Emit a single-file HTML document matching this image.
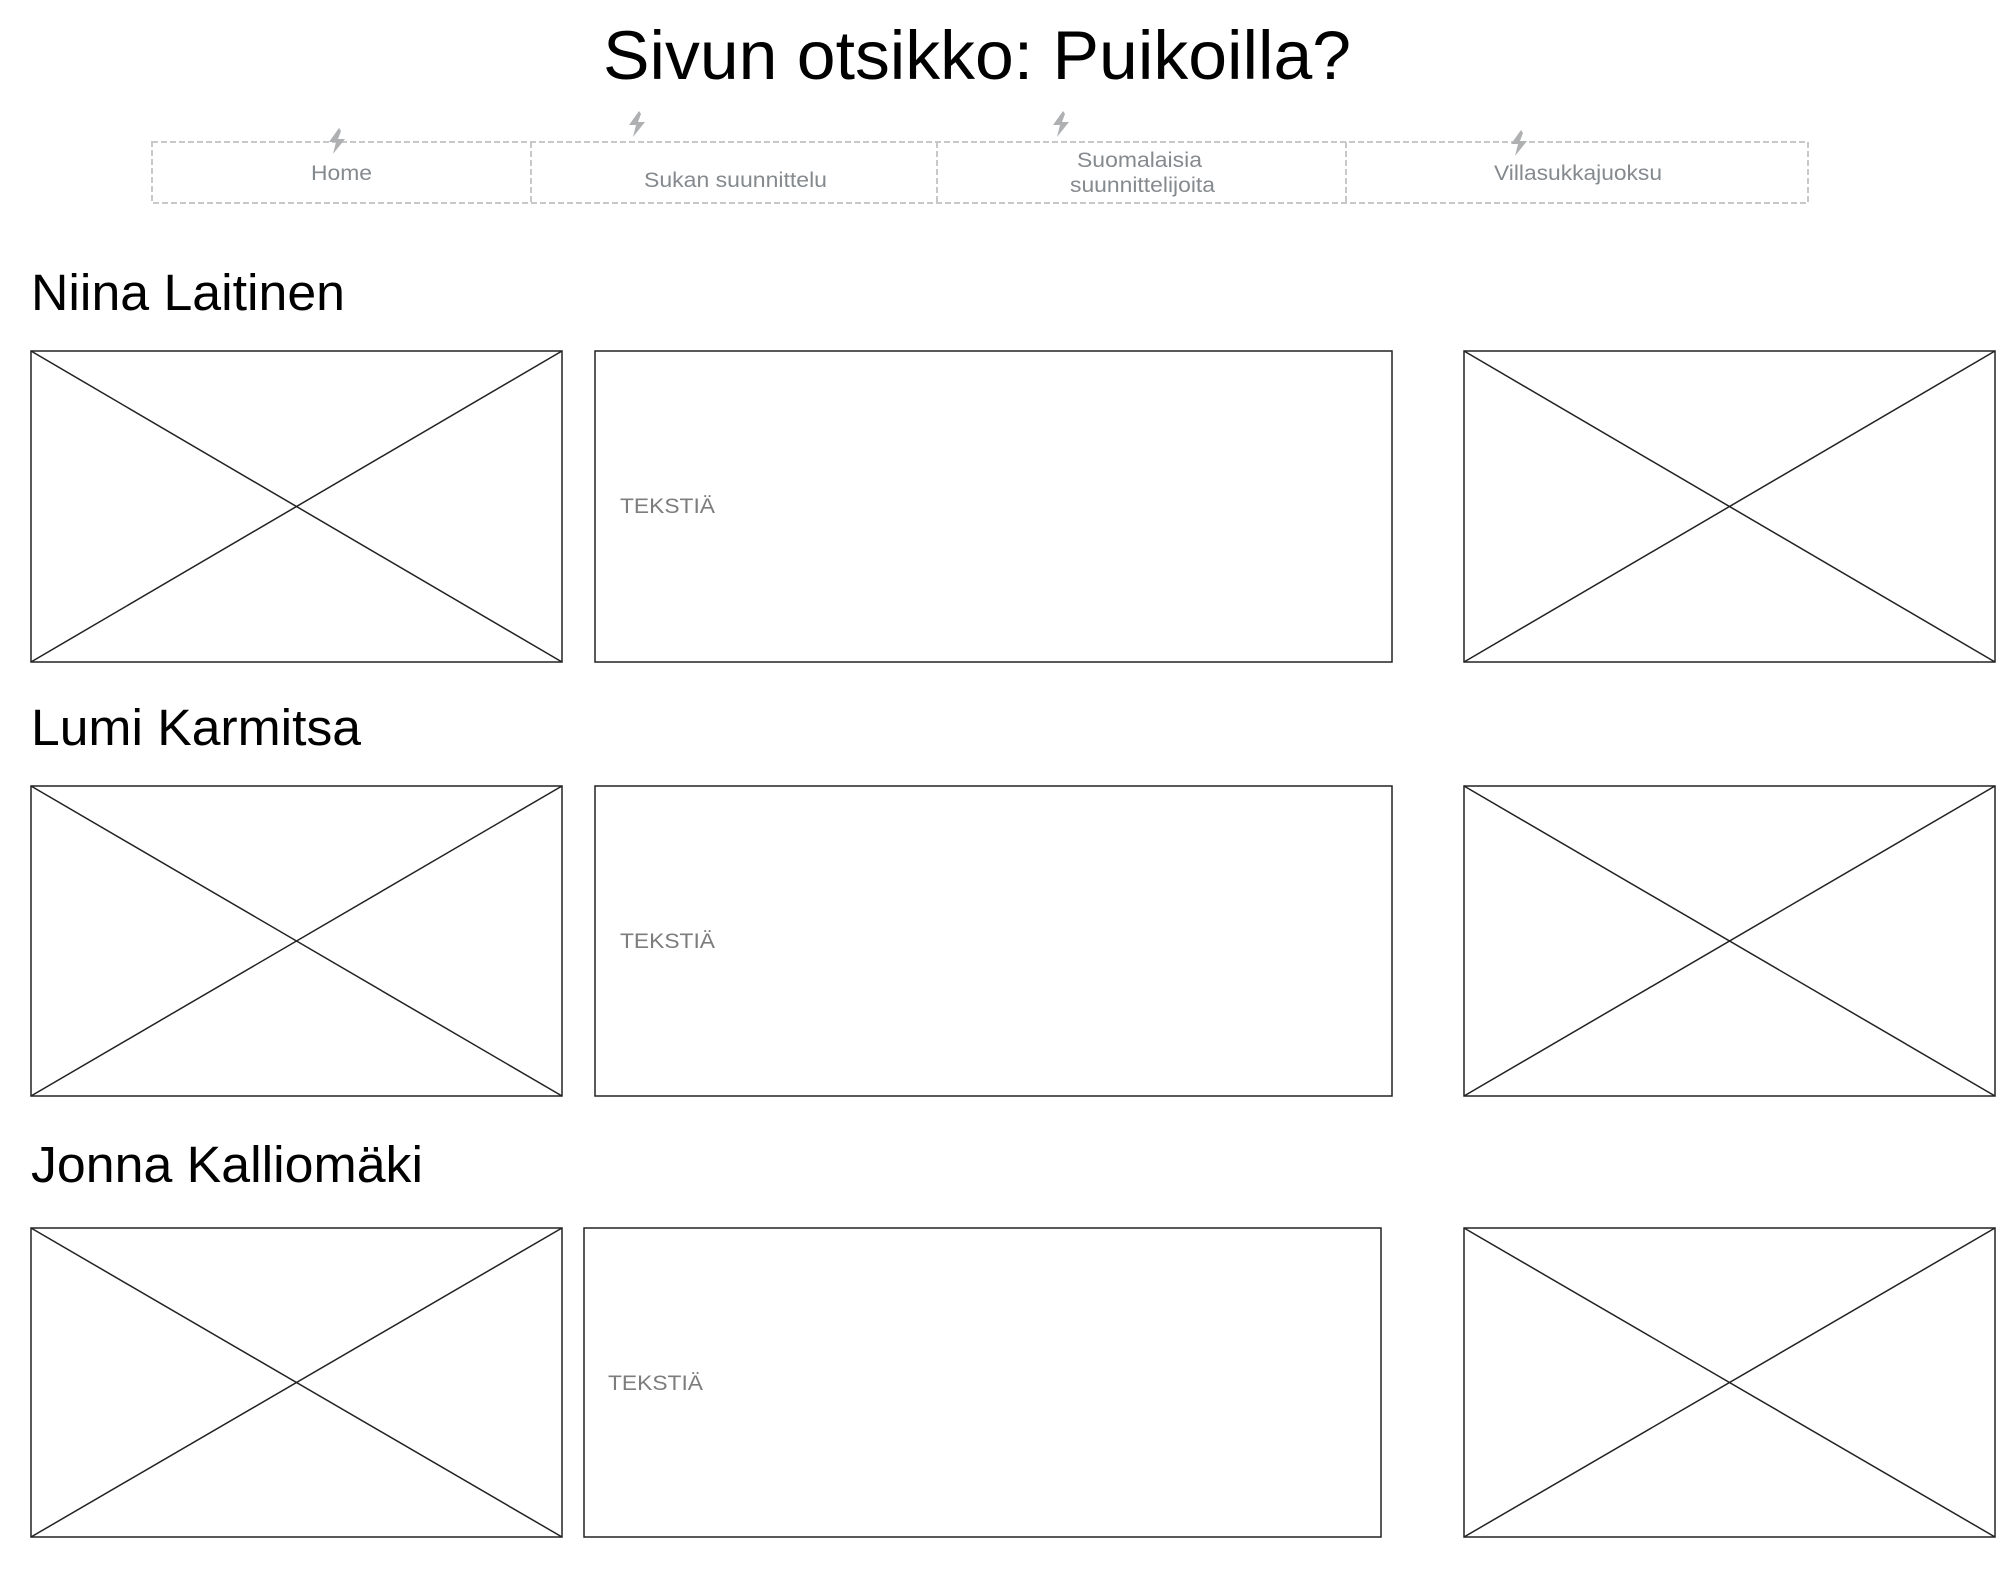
<!DOCTYPE html>
<html><head><meta charset="utf-8"><style>
html,body{margin:0;padding:0;background:#fff;}
svg{display:block;font-family:"Liberation Sans",Arial,sans-serif;}
</style></head><body>
<svg width="2016" height="1584" viewBox="0 0 2016 1584" xmlns="http://www.w3.org/2000/svg">
<defs>
<symbol id="bolt" viewBox="0 0 22 26">
<polygon points="13,0 3,14 10,14 7,26 19,11 12,11 15,3" fill="#aeb0b2"/>
</symbol>
</defs>
<text x="977" y="79" font-size="69" text-anchor="middle" fill="#000" textLength="748" lengthAdjust="spacingAndGlyphs">Sivun otsikko: Puikoilla?</text>

<g fill="none" stroke="#c8c8c8" stroke-width="2" stroke-dasharray="6,3">
<rect x="152" y="142" width="1656" height="61"/>
<line x1="531" y1="142" x2="531" y2="203"/>
<line x1="937" y1="142" x2="937" y2="203"/>
<line x1="1346" y1="142" x2="1346" y2="203"/>
</g>
<use href="#bolt" x="326" y="128" width="22" height="26"/>
<use href="#bolt" x="626" y="111" width="22" height="26"/>
<use href="#bolt" x="1050" y="111" width="22" height="26"/>
<use href="#bolt" x="1508" y="130" width="22" height="26"/>
<g font-size="21" fill="#858a8e" lengthAdjust="spacingAndGlyphs">
<text x="311" y="180" textLength="61" lengthAdjust="spacingAndGlyphs">Home</text>
<text x="644" y="187" textLength="183" lengthAdjust="spacingAndGlyphs">Sukan suunnittelu</text>
<text x="1077" y="167" textLength="125" lengthAdjust="spacingAndGlyphs">Suomalaisia</text>
<text x="1070" y="192" textLength="145" lengthAdjust="spacingAndGlyphs">suunnittelijoita</text>
<text x="1494" y="180" textLength="168" lengthAdjust="spacingAndGlyphs">Villasukkajuoksu</text>
</g>

<g font-size="51" fill="#000">
<text x="31" y="310" textLength="314" lengthAdjust="spacingAndGlyphs">Niina Laitinen</text>
<text x="31" y="745" textLength="330" lengthAdjust="spacingAndGlyphs">Lumi Karmitsa</text>
<text x="31" y="1182" textLength="392" lengthAdjust="spacingAndGlyphs">Jonna Kalliomäki</text>
</g>

<g fill="none" stroke="#222" stroke-width="1.5">
<rect x="31" y="351" width="531" height="311"/>
<line x1="31" y1="351" x2="562" y2="662"/><line x1="562" y1="351" x2="31" y2="662"/>
<rect x="595" y="351" width="797" height="311"/>
<rect x="1464" y="351" width="531" height="311"/>
<line x1="1464" y1="351" x2="1995" y2="662"/><line x1="1995" y1="351" x2="1464" y2="662"/>
<rect x="31" y="786" width="531" height="310"/>
<line x1="31" y1="786" x2="562" y2="1096"/><line x1="562" y1="786" x2="31" y2="1096"/>
<rect x="595" y="786" width="797" height="310"/>
<rect x="1464" y="786" width="531" height="310"/>
<line x1="1464" y1="786" x2="1995" y2="1096"/><line x1="1995" y1="786" x2="1464" y2="1096"/>
<rect x="31" y="1228" width="531" height="309"/>
<line x1="31" y1="1228" x2="562" y2="1537"/><line x1="562" y1="1228" x2="31" y2="1537"/>
<rect x="584" y="1228" width="797" height="309"/>
<rect x="1464" y="1228" width="531" height="309"/>
<line x1="1464" y1="1228" x2="1995" y2="1537"/><line x1="1995" y1="1228" x2="1464" y2="1537"/>
</g>
<g font-size="21" fill="#7d7d7d">
<text x="620" y="513" textLength="95" lengthAdjust="spacingAndGlyphs">TEKSTIÄ</text>
<text x="620" y="948" textLength="95" lengthAdjust="spacingAndGlyphs">TEKSTIÄ</text>
<text x="608" y="1390" textLength="95" lengthAdjust="spacingAndGlyphs">TEKSTIÄ</text>
</g>
</svg>
</body></html>
